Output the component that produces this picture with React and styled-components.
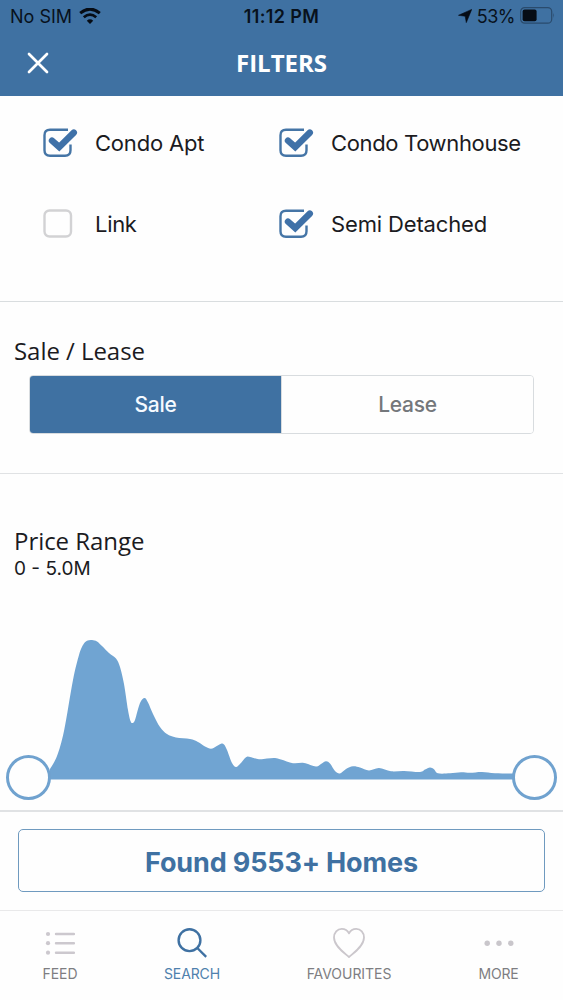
import React, { useState } from "react";
import styled, { createGlobalStyle } from "styled-components";

const GlobalStyle = createGlobalStyle`
  * {
    box-sizing: border-box;
  }

  body {
    margin: 0;
    background-color: #fefefe;
    font-family: Inter, "Liberation Sans", sans-serif;
    color: #1b1b1f;
  }

  button {
    font-family: inherit;
    padding: 0;
    margin: 0;
    border: none;
    background: none;
  }
`;

const Screen = styled.div`
  width: 563px;
  height: 1000px;
  display: flex;
  flex-direction: column;
  overflow: hidden;
`;

const TopBar = styled.header`
  height: 96px;
  background-color: #3f71a2;
`;

const StatusBar = styled.div`
  height: 32px;
  padding: 0 8px 0 10px;
  display: grid;
  grid-template-columns: 1fr auto 1fr;
  align-items: center;
  color: #08111c;
  font-size: 18px;
`;

const StatusGroup = styled.div`
  display: flex;
  align-items: center;
  justify-content: ${(props) => (props.$end ? "flex-end" : "flex-start")};
  gap: ${(props) => (props.$end ? "5px" : "7px")};
  letter-spacing: ${(props) => (props.$end ? "-0.5px" : "0")};
`;

const Time = styled.span`
  font-weight: 600;
  letter-spacing: 0.4px;
  margin-right: 2px;
`;

const NavBar = styled.div`
  height: 62px;
  padding: 0 27px;
  display: grid;
  grid-template-columns: 1fr auto 1fr;
  align-items: center;
`;

const CloseButton = styled.button`
  width: 22px;
  height: 22px;
`;

const NavTitle = styled.h1`
  margin: 0;
  padding-bottom: 2px;
  color: #fff;
  font: 700 24px "Open Sans", sans-serif;
`;

const Types = styled.section`
  height: 206px;
  padding: 6px 0 0 43px;
  display: grid;
  grid-template-columns: 236px 1fr;
  grid-auto-rows: 81px;
  border-bottom: 1px solid #d9dddf;
`;

const Option = styled.label`
  display: flex;
  align-items: center;
  gap: 17px;
  font-size: 22px;
  letter-spacing: ${(props) => props.$spacing || "0"};
  white-space: nowrap;
`;

const Section = styled.section`
  height: ${(props) => props.$height}px;
  padding-top: ${(props) => props.$top}px;
  border-bottom: ${(props) => props.$line}px solid #e0e2e4;
`;

const SectionTitle = styled.h2`
  margin: 0 0 0 14px;
  font: 400 24px/32px "Open Sans", sans-serif;
  letter-spacing: -0.05px;
`;

const Segments = styled.div`
  display: flex;
  width: 505px;
  height: 59px;
  margin: 8px 0 0 29px;
  border: 1px solid #d8dcdf;
  border-radius: 4px;
  overflow: hidden;
`;

const Segment = styled.button`
  flex: 1;
  padding-bottom: 1px;
  font-size: 21px;
  font-weight: 500;
  letter-spacing: -0.25px;
  color: ${(props) => (props.$active ? "#f5faff" : "#74777b")};
  background-color: ${(props) => (props.$active ? "#3f71a2" : "#fefefe")};

  & + & {
    border-left: 1px solid #d8dcdf;
  }
`;

const RangeText = styled.div`
  margin-left: 14px;
  font-size: 19px;
  line-height: 24px;
`;

const RangeChart = styled.div`
  position: relative;
  height: 172px;
  margin-top: 49px;

  svg {
    display: block;
  }
`;

const Handle = styled.button`
  position: absolute;
  top: 125px;
  left: ${(props) => props.$left}px;
  width: 45px;
  height: 45px;
  border: 3px solid #70a2cf;
  border-radius: 50%;
  background-color: #fefefe;
`;

const ResultBar = styled.div`
  height: 98px;
  padding: 17px 18px 0;
`;

const ResultButton = styled.button`
  width: 527px;
  height: 63px;
  padding-top: 4px;
  border: 1px solid #6f9abf;
  border-radius: 5px;
  color: #3f71a2;
  font-size: 27px;
  font-weight: 700;
  letter-spacing: -0.15px;
`;

const TabBar = styled.nav`
  height: 90px;
  display: grid;
  grid-template-columns: 120px 144px 170px 129px;
  border-top: 1px solid #e9e9ea;
`;

const Tab = styled.button`
  display: flex;
  flex-direction: column;
  align-items: center;
  gap: 5px;
  padding-top: 16px;
  font-size: 14px;
  line-height: 19px;
  letter-spacing: ${(props) => props.$spacing || "0"};
  color: ${(props) => (props.$active ? "#4f81ad" : "#7e7e82")};
`;

const Checkbox = ({ checked }) => (
  <svg width="35" height="30" viewBox="0 0 35 30" fill="none">
    {checked ? (
      <>
        <path
          d="M25 1.8H7Q1.5 1.8 1.5 7.3V22.3Q1.5 27.8 7 27.8H22Q27.5 27.8 27.5 22.3V16.5"
          stroke="#4575a6"
          strokeWidth="2.4"
        />
        <path
          d="M9 12.6L16.2 19L30.8 4.6"
          stroke="#3f71a8"
          strokeWidth="6.4"
          strokeLinejoin="miter"
          strokeLinecap="round"
        />
      </>
    ) : (
      <rect x="1.5" y="1.5" width="26.5" height="26" rx="5" stroke="#d2d2d4" strokeWidth="2.4" />
    )}
  </svg>
);

const WifiIcon = () => (
  <svg width="22" height="16" viewBox="0 0 22 16" fill="none" stroke="#060c15">
    <path d="M1.2 5.2Q11 -3 20.8 5.2" strokeWidth="3" />
    <path d="M4.8 9.2Q11 4 17.2 9.2" strokeWidth="2.8" />
    <path d="M11 16L7.8 12.7Q11 10 14.2 12.7Z" fill="#060c15" stroke="none" />
  </svg>
);

const LocationIcon = () => (
  <svg width="14" height="14" viewBox="0 0 14 14">
    <path d="M13.7 0.4L8.3 13.6L7.2 7.2L0.5 6.3Z" fill="#060c15" stroke="#060c15" strokeWidth="0.6" strokeLinejoin="round" />
  </svg>
);

const BatteryIcon = () => (
  <svg width="35" height="18" viewBox="0 0 35 18">
    <rect x="0.7" y="0.6" width="31" height="15.6" rx="4" fill="none" stroke="#2a4b6d" strokeWidth="1.2" />
    <rect x="2.6" y="2.6" width="14" height="11.6" rx="2" fill="#060c15" />
    <path d="M33.3 5.8Q35 8.4 33.3 11Z" fill="#2a4b6d" />
  </svg>
);

const ListIcon = () => (
  <svg width="30" height="32" viewBox="0 0 30 32">
    {[7, 16.2, 25.7].map((y) => (
      <g key={y}>
        <circle cx="3" cy={y} r="2.1" fill="#ccc8ce" />
        <path d={`M11 ${y}H29`} stroke="#ccc8ce" strokeWidth="2.4" strokeLinecap="round" />
      </g>
    ))}
  </svg>
);

const SearchIcon = () => (
  <svg width="30" height="32" viewBox="0 0 30 32" fill="none" stroke="#3f71a2" strokeWidth="2.4">
    <circle cx="12.5" cy="13.2" r="10.9" />
    <path d="M20.3 21L29.2 29.8" />
  </svg>
);

const HeartIcon = () => (
  <svg width="32" height="32" viewBox="0 0 32 32" fill="none">
    <path
      d="M16 30C11.5 26 1 19 1 10.5C1 5.5 4.3 1.8 8.8 1.8C12 1.8 14.5 3.4 16 6.4C17.5 3.4 20 1.8 23.2 1.8C27.7 1.8 31 5.5 31 10.5C31 19 20.5 26 16 30Z"
      stroke="#cbc7cc"
      strokeWidth="1.8"
      strokeLinejoin="round"
    />
  </svg>
);

const MoreIcon = () => (
  <svg width="30" height="32" viewBox="0 0 30 32" fill="#c9c6cb">
    <circle cx="3.2" cy="16.2" r="2.7" />
    <circle cx="15" cy="16.2" r="2.7" />
    <circle cx="26.8" cy="16.2" r="2.7" />
  </svg>
);

// price distribution, y counted down from the top of the chart
const points = [
  [50, 139], [57, 126], [64, 101], [73, 50], [79, 25], [83, 15], [87, 10.8],
  [92, 10], [97, 11.5], [102, 16], [109, 23], [116, 28.5], [120, 37], [124, 54],
  [128, 80], [130.5, 91], [132.5, 93], [135, 90], [140, 73], [144.5, 68],
  [148, 72.5], [153, 84], [160, 97], [167, 104], [176, 107.5], [190, 109],
  [198, 112], [205, 116.5], [211, 118.8], [216, 116.5], [221, 113.7], [224, 114.5],
  [227, 120], [232, 133], [236, 137], [240, 134], [246, 127.3], [250, 127],
  [259, 129.3], [267, 128.5], [275, 128], [281, 129.5], [293, 133.2], [304, 133],
  [316, 136.5], [321, 134], [326, 131.3], [330, 133.5], [335, 141], [340, 143.5],
  [346, 139], [353, 136.3], [360, 137.5], [369, 140.5], [379, 138], [391, 141.3],
  [404, 141], [420, 142], [425, 139.5], [430, 137.5], [434, 139.3], [438, 143.3],
  [450, 143.3], [461, 142.2], [470, 142.8], [482, 142], [495, 143.3], [514, 143.5],
];

const toPath = (pts) => {
  let d = `M${pts[0]}`;
  for (let i = 0; i < pts.length - 1; i++) {
    const a = pts[i - 1] || pts[i];
    const b = pts[i];
    const c = pts[i + 1];
    const e = pts[i + 2] || c;
    d += `C${b[0] + (c[0] - a[0]) / 6},${b[1] + (c[1] - a[1]) / 6}`;
    d += ` ${c[0] - (e[0] - b[0]) / 6},${c[1] - (e[1] - b[1]) / 6} ${c}`;
  }
  return d + "V149.5H50Z";
};

const types = [
  { name: "Condo Apt", spacing: "-0.2px" },
  { name: "Condo Townhouse", spacing: "-0.35px" },
  { name: "Link", spacing: "-0.3px" },
  { name: "Semi Detached", spacing: "-0.15px" },
];

const tabs = [
  { name: "FEED", icon: <ListIcon /> },
  { name: "SEARCH", icon: <SearchIcon />, spacing: "-0.1px" },
  { name: "FAVOURITES", icon: <HeartIcon />, spacing: "-0.05px" },
  { name: "MORE", icon: <MoreIcon />, spacing: "-0.2px" },
];

const App = () => {
  const [selected, setSelected] = useState(["Condo Apt", "Condo Townhouse", "Semi Detached"]);
  const [mode, setMode] = useState("Sale");
  const [tab, setTab] = useState("SEARCH");

  const toggle = (name) =>
    setSelected(
      selected.includes(name) ? selected.filter((item) => item !== name) : [...selected, name]
    );

  return (
    <Screen>
      <GlobalStyle />
      <TopBar>
        <StatusBar>
          <StatusGroup>
            No SIM <WifiIcon />
          </StatusGroup>
          <Time>11:12 PM</Time>
          <StatusGroup $end>
            <LocationIcon />
            <span>53%</span>
            <BatteryIcon />
          </StatusGroup>
        </StatusBar>
        <NavBar>
          <CloseButton>
            <svg width="22" height="22" viewBox="0 0 22 22">
              <path d="M2 2L20 20M20 2L2 20" stroke="#fff" strokeWidth="2.7" strokeLinecap="round" />
            </svg>
          </CloseButton>
          <NavTitle>FILTERS</NavTitle>
        </NavBar>
      </TopBar>

      <Types>
        {types.map((type) => (
          <Option key={type.name} $spacing={type.spacing} onClick={() => toggle(type.name)}>
            <Checkbox checked={selected.includes(type.name)} />
            {type.name}
          </Option>
        ))}
      </Types>

      <Section $height={172} $top={33} $line={1}>
        <SectionTitle>Sale / Lease</SectionTitle>
        <Segments>
          {["Sale", "Lease"].map((name) => (
            <Segment key={name} $active={mode === name} onClick={() => setMode(name)}>
              {name}
            </Segment>
          ))}
        </Segments>
      </Section>

      <Section $height={338} $top={51} $line={2}>
        <SectionTitle>Price Range</SectionTitle>
        <RangeText>0 - 5.0M</RangeText>
        <RangeChart>
          <svg width="563" height="172" viewBox="0 0 563 172">
            <path d={toPath(points)} fill="#70a4d2" />
          </svg>
          <Handle $left={6} />
          <Handle $left={512} />
        </RangeChart>
      </Section>

      <ResultBar>
        <ResultButton>Found 9553+ Homes</ResultButton>
      </ResultBar>

      <TabBar>
        {tabs.map(({ name, icon, spacing }) => (
          <Tab key={name} $active={tab === name} $spacing={spacing} onClick={() => setTab(name)}>
            {icon}
            {name}
          </Tab>
        ))}
      </TabBar>
    </Screen>
  );
};

export default App;
